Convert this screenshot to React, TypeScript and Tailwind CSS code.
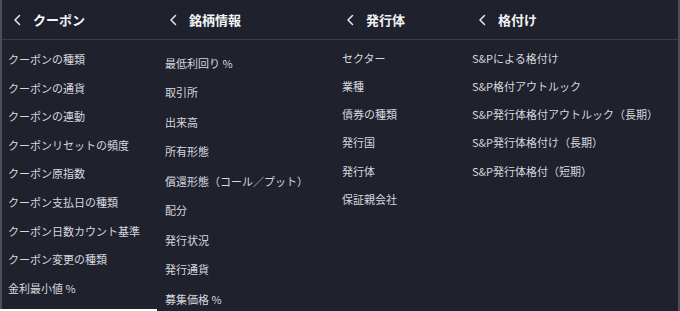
import React from "react";

const font = { fontFamily: '"Noto Sans CJK JP", "Noto Sans", sans-serif' };

function Chevron() {
  return (
    <svg width="9" height="12" viewBox="0 0 9 12" className="shrink-0">
      <path d="M6.5 1.5 L2 6 L6.5 10.5" fill="none" stroke="#e6e8ee" strokeWidth="1.5" strokeLinecap="round" strokeLinejoin="round" />
    </svg>
  );
}

type ColProps = {
  title: string;
  items: string[];
  width: string;
  height: string;
  headPad: string;
  listPad: string;
  itemH: string;
  itemPad: string;
  extra?: string;
};

function Column({ title, items, width, height, headPad, listPad, itemH, itemPad, extra }: ColProps) {
  return (
    <div className={`flex flex-col bg-[#1f212d] shrink-0 ${width} ${height} ${extra ?? ""}`}>
      <div className={`flex h-[40px] items-center gap-[11px] border-b border-[#3a3d49] ${headPad}`}>
        <Chevron />
        <span className="text-[13px] font-bold text-[#f3f4f7] leading-none">{title}</span>
      </div>
      <div className={`flex flex-col ${listPad}`}>
        {items.map((t) => (
          <div key={t} className={`flex items-center ${itemH} ${itemPad} text-[11px] text-[#d5d8df] whitespace-nowrap`}>
            {t}
          </div>
        ))}
      </div>
    </div>
  );
}

export default function App() {
  return (
    <div className="w-[680px] h-[311px] overflow-hidden bg-white flex items-start" style={font}>
      <Column
        title="クーポン"
        width="w-[157px]"
        height="h-[309px]"
        headPad="pl-[11px]"
        listPad="pt-[5px]"
        itemH="h-[28.6px]"
        itemPad="pl-[6px]"
        extra="border-l-2 border-l-[#4b4e58]"
        items={[
          "クーポンの種類",
          "クーポンの通貨",
          "クーポンの連動",
          "クーポンリセットの頻度",
          "クーポン原指数",
          "クーポン支払日の種類",
          "クーポン日数カウント基準",
          "クーポン変更の種類",
          "金利最小値 %",
        ]}
      />
      <Column
        title="銘柄情報"
        width="w-[178px]"
        height="h-[320px]"
        headPad="pl-[12px]"
        listPad="pt-[8px]"
        itemH="h-[29.5px]"
        itemPad="pl-[8px]"
        items={[
          "最低利回り %",
          "取引所",
          "出来高",
          "所有形態",
          "償還形態（コール／プット）",
          "配分",
          "発行状況",
          "発行通貨",
          "募集価格 %",
        ]}
      />
      <Column
        title="発行体"
        width="w-[129px]"
        height="h-[320px]"
        headPad="pl-[11px]"
        listPad="pt-[4px]"
        itemH="h-[28.2px]"
        itemPad="pl-[7px]"
        items={["セクター", "業種", "債券の種類", "発行国", "発行体", "保証親会社"]}
      />
      <Column
        title="格付け"
        width="flex-1"
        height="h-[320px]"
        headPad="pl-[14px]"
        listPad="pt-[4px]"
        itemH="h-[28.2px]"
        itemPad="pl-[8px]"
        extra="border-r-2 border-r-[#4b4e58]"
        items={[
          "S&Pによる格付け",
          "S&P格付アウトルック",
          "S&P発行体格付アウトルック（長期）",
          "S&P発行体格付け（長期）",
          "S&P発行体格付（短期）",
        ]}
      />
    </div>
  );
}
